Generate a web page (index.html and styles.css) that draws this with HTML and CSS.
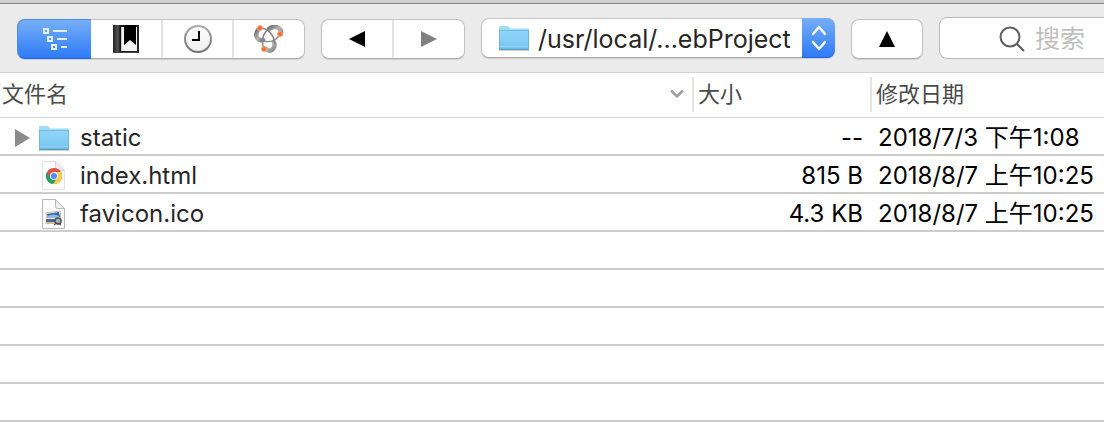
FILE: index.html
```html
<!DOCTYPE html>
<html lang="zh-CN">
<head>
<meta charset="utf-8">
<meta name="viewport" content="width=device-width, initial-scale=1">
<title>文件</title>
<link rel="stylesheet" href="styles.css">
</head>
<body>
<svg class="defs" aria-hidden="true">
  <defs>
    <linearGradient id="folder-fill" x1="0" y1="0" x2="0" y2="1">
      <stop offset="0" stop-color="#90d5f8"/><stop offset="1" stop-color="#78c5f0"/>
    </linearGradient>
    <linearGradient id="metal" x1="0" y1="0" x2="1" y2="1">
      <stop offset="0" stop-color="#777"/><stop offset=".5" stop-color="#b4b4b4"/><stop offset="1" stop-color="#888"/>
    </linearGradient>
    <linearGradient id="spine" x1="0" y1="0" x2="1" y2="0">
      <stop offset="0" stop-color="#222"/><stop offset=".6" stop-color="#555"/><stop offset="1" stop-color="#050505"/>
    </linearGradient>
    <linearGradient id="dial" x1="0" y1="0" x2="0" y2="1">
      <stop offset="0" stop-color="#fff"/><stop offset="1" stop-color="#ededed"/>
    </linearGradient>
    <linearGradient id="rim" x1="0" y1="0" x2="0" y2="1">
      <stop offset="0" stop-color="#aaa"/><stop offset="1" stop-color="#707070"/>
    </linearGradient>
    <symbol id="folder" viewBox="0 0 32 26">
      <path d="M1 25.500h30" stroke="#c9d2d6"/>
      <path d="M1 23V2q0-1 1-1h7q1 0 2 1l1 1.500h18q1 0 1 1V23q0 1-1 1H2q-1 0-1-1z" fill="#a2dcf9"/>
      <path d="M1 6h30v17q0 1-1 1H2q-1 0-1-1z" fill="url(#folder-fill)"/>
      <path d="M1 5.500h30" stroke="#70b9df"/>
      <path d="M1.500 6v17.500h29V6" fill="none" stroke="#6fb9df"/>
      <path d="M2 21.500h28" stroke="#91d3f5"/>
      <path d="M1 24.500h30" stroke="#599fc5"/>
    </symbol>
  </defs>
</svg>
<header class="toolbar">
  <div class="group views">
    <button class="seg active" type="button" aria-label="列表">
      <svg width="24" height="24" viewBox="0 0 24 24" fill="none" stroke="#e2efff" stroke-width="2">
        <path d="M1 2h4v4H1zM5 10h4v4H5zM9 18h4v4H9zM10 4h14M14 12h10M18 20h6"/>
      </svg>
    </button>
    <button class="seg" type="button" aria-label="书签">
      <svg width="26" height="28" viewBox="0 0 26 28">
        <path fill="#222" d="M0 0h26v28H0z"/><path fill="url(#spine)" d="M0 0h8v28H0z"/>
        <path fill="#f2f2f2" d="M8 2h16v24H8z"/><path fill="#ccc" d="M8 2h1v24H8z"/>
        <path d="M11 0h12v20l-6-5-6 5z"/><path d="M0 27.500h26" stroke="#444"/>
      </svg>
    </button>
    <button class="seg" type="button" aria-label="历史记录">
      <svg width="28" height="28" viewBox="0 0 28 28">
        <circle cx="14" cy="14" r="13" fill="url(#dial)" stroke="url(#rim)" stroke-width="2"/>
        <path d="M15 6v9H8" fill="none" stroke="#000" stroke-width="2"/>
      </svg>
    </button>
    <button class="seg" type="button" aria-label="Bonjour">
      <svg width="30" height="28" viewBox="0 0 30 28">
        <g fill="none" stroke-linecap="round">
          <path d="M4 5C0 11 4 16 9 15" stroke="url(#metal)" stroke-width="4.500"/>
          <path d="M15 4C20 0 28 2 27 9" stroke="url(#metal)" stroke-width="4.500"/>
          <path d="M12 24C17 28 22 23 20 17" stroke="url(#metal)" stroke-width="4.500"/>
          <path d="M6 3C14 3 20 10 21 19M10 24C6 14 10 5 19 2M26 9C22 17 14 18 6 15" stroke="#858585" stroke-width="1.500"/>
        </g>
        <g fill="#f26b2b" stroke="#f8a47c"><circle cx="6" cy="3" r="2.500"/><circle cx="26" cy="9" r="2.500"/><circle cx="10" cy="24" r="2.500"/></g>
      </svg>
    </button>
  </div>
  <div class="group nav">
    <button class="seg" type="button" aria-label="后退"><svg width="16" height="16" viewBox="0 0 16 16"><path d="M16 0v16L0 8z"/></svg></button>
    <button class="seg" type="button" aria-label="前进" disabled><svg width="16" height="16" viewBox="0 0 16 16"><path fill="#808080" d="M0 0v16l16-8z"/></svg></button>
  </div>
  <div class="path">
    <svg class="folder" aria-hidden="true"><use href="#folder"/></svg>
    <select class="path-select" aria-label="路径"><option>/usr/local/...ebProject</option></select>
    <span class="stepper">
      <svg width="16" height="26" viewBox="0 0 16 26" fill="none" stroke="#fff" stroke-width="2.500" stroke-linecap="round" stroke-linejoin="round"><path d="M2 9l6-7 6 7M2 17l6 7 6-7"/></svg>
    </span>
  </div>
  <div class="group up">
    <button class="seg" type="button" aria-label="上级目录"><svg width="16" height="16" viewBox="0 0 16 16"><path d="M8 0l8 16H0z"/></svg></button>
  </div>
  <label class="search">
    <svg width="26" height="26" viewBox="0 0 26 26" fill="none" stroke="#5d5d5d" stroke-width="2"><circle cx="11" cy="11" r="9.500"/><path d="M17.500 17.500L25 25"/></svg>
    <input class="search-input" type="text" placeholder="搜索" aria-label="搜索">
  </label>
</header>
<main>
  <table class="files">
    <colgroup><col class="col-name"><col class="col-size"><col class="col-date"></colgroup>
    <thead>
      <tr>
        <th><div class="head sorted">文件名<svg width="16" height="10" viewBox="0 0 16 10" fill="none" stroke="#a0a0a0" stroke-width="2.500"><path d="M2 1.500l6 6 6-6"/></svg></div></th>
        <th><div class="head divided">大小</div></th>
        <th><div class="head divided">修改日期</div></th>
      </tr>
    </thead>
    <tbody>
      <tr>
        <td><div class="name">
          <button class="expand" type="button" aria-label="展开"><svg width="15" height="18" viewBox="0 0 15 18"><path fill="#8b8b8b" d="M0 0v18l15-9z"/></svg></button>
          <svg class="folder" aria-hidden="true"><use href="#folder"/></svg>static</div></td>
        <td class="size">--</td><td class="date">2018/7/3 下午1:08</td>
      </tr>
      <tr>
        <td><div class="name">
          <span class="expand"></span>
          <svg class="doc" viewBox="0 0 32 32" aria-hidden="true">
            <path d="M4.500 1.500h13l9 9v19h-22z" fill="#fcfcfc" stroke="#e3e3e3"/>
            <path d="M17.500 1.500v7q0 2 2 2h7z" fill="#ededed" stroke="#d8d8d8"/>
            <circle cx="16" cy="16" r="8" fill="#dd5144"/>
            <path d="M9.070 12A8 8 0 0 0 15 23.930L19.500 18 16 16l-3.500 2z" fill="#1da462"/>
            <path d="M22.930 12A8 8 0 0 1 15 23.930L19.500 18 16 12z" fill="#ffcd46"/>
            <circle cx="16" cy="16" r="4" fill="#f4f4f4"/><circle cx="16" cy="16" r="3" fill="#4c8bf5"/>
          </svg>index.html</div></td>
        <td class="size">815 B</td><td class="date">2018/8/7 上午10:25</td>
      </tr>
      <tr>
        <td><div class="name">
          <span class="expand"></span>
          <svg class="doc" viewBox="0 0 32 32" aria-hidden="true">
            <path d="M4.500 1.500h13l9 9v20h-22z" fill="#fdfdfd" stroke="#b8b8b8"/>
            <path d="M17.500 1.500v7q0 2 2 2h7z" fill="#eee" stroke="#b8b8b8"/>
            <path d="M8 15l14-2 1 10-14 3z" fill="#fff" stroke="#c4b798"/>
            <path d="M9 16l12-2 1 5-12 1z" fill="#3765ae"/><path d="M9 18q7-3 12 0v2H9z" fill="#92b9e1"/>
            <path d="M7 20h14v6H7z" fill="#eee8dc"/><path d="M8 21h9v3H8z" fill="#46698b"/>
            <path d="M8 25h10" stroke="#b39256"/>
            <circle cx="20" cy="23" r="3" fill="#aab0b2" stroke="#50565a" stroke-width="1.500"/><path d="M16 27l3-2 4 2" fill="none" stroke="#444"/>
          </svg>favicon.ico</div></td>
        <td class="size">4.3 KB</td><td class="date">2018/8/7 上午10:25</td>
      </tr>
      <tr><td></td><td></td><td></td></tr>
      <tr><td></td><td></td><td></td></tr>
      <tr><td></td><td></td><td></td></tr>
      <tr><td></td><td></td><td></td></tr>
      <tr><td></td><td></td><td></td></tr>
    </tbody>
  </table>
</main>
</body>
</html>
```
FILE: styles.css
```css
* { box-sizing: border-box; }
body {
  margin: 0;
  background: #fff;
  color: #262626;
  font-family: Inter, "Noto Sans CJK SC", sans-serif;
  font-size: 24px;
  line-height: 32px;
  overflow-x: hidden;
}
.defs { position: absolute; width: 0; height: 0; }
button, input, select { font: inherit; color: inherit; margin: 0; padding: 0; border: 0; background: none; }
svg { display: block; flex: none; }

.toolbar {
  display: flex;
  align-items: center;
  gap: 16px;
  padding: 17px 0 12px 17px;
  background: linear-gradient(#cfcfcf 3px, #858585 3px, #858585 4px, #ebebeb 4px);
  box-shadow: inset 0 -1px #d3d3d3;
  overflow: hidden;
}
.group {
  display: flex;
  flex: none;
  height: 40px;
  border: 1px solid #c4c4c4;
  border-bottom-color: #adadad;
  border-radius: 8px;
  background: #fff;
  box-shadow: 0 1px 1px #d0d0d0;
}
.views { width: 288px; }
.nav { width: 144px; }
.up { width: 72px; }
.seg {
  display: flex;
  flex: 1;
  align-items: center;
  justify-content: center;
}
.seg + .seg { border-left: 2px solid #e3e3e3; }
.seg.active {
  flex: 0 0 74px;
  margin: -1px 0 -1px -1px;
  border: 1px solid #4d8de8;
  border-width: 1px 0 1px 1px;
  border-radius: 8px 0 0 8px;
  border-bottom-color: #2164dc;
  background: linear-gradient(#76aff5, #2f7bf8);
}
.seg.active + .seg { flex-basis: -2px; border-left: 0; }

.path {
  display: flex;
  flex: none;
  align-items: center;
  width: 354px;
  height: 40px;
  margin-bottom: 2px;
  padding-left: 16px;
  border: 1px solid #c4c4c4;
  border-bottom-color: #adadad;
  border-radius: 8px;
  background: #fff;
  box-shadow: 0 1px 1px #d0d0d0;
}
.folder { width: 32px; height: 26px; }
.path-select {
  flex: 1;
  min-width: 0;
  height: 38px;
  margin-left: 8px;
  padding-top: 2px;
  appearance: none;
  font-size: 25px;
  line-height: 36px;
}
.stepper {
  display: flex;
  flex: none;
  align-items: center;
  justify-content: center;
  align-self: stretch;
  width: 33px;
  margin: -1px -1px -1px 0;
  border-bottom: 1px solid #2164dc;
  border-radius: 0 8px 8px 0;
  background: linear-gradient(#76aff5, #2f7bf8);
}
.search {
  display: flex;
  flex: none;
  align-items: center;
  gap: 10px;
  width: 208px;
  height: 42px;
  margin-bottom: 2px;
  padding: 2px 0 0 59px;
  border: 1px solid #b9b9b9;
  border-radius: 8px;
  background: #fff;
}
.search-input { width: 100px; height: 38px; outline: 0; font-size: 25px; }
.search-input::placeholder { color: #bfbfbf; opacity: 1; }

.files { width: 100%; border-collapse: separate; border-spacing: 0; table-layout: fixed; }
.col-name { width: 692px; }
.col-size { width: 178px; }
th {
  height: 45px;
  padding: 4px 0 5px;
  border-bottom: 1px solid #d3d3d3;
  text-align: left;
  font-weight: 400;
}
.head {
  display: flex;
  align-items: center;
  height: 35px;
  padding: 0 7px 2px 2px;
  color: #4a4a4a;
  font-size: 22px;
}
.sorted { justify-content: space-between; }
.divided { padding-left: 4px; border-left: 2px solid #e3e3e3; }
td { height: 38px; padding: 4px 0 0; border-bottom: 2px solid #ccc; white-space: nowrap; }
.name { display: flex; align-items: center; padding-left: 15px; }
.name .folder, .doc { margin-right: 10px; }
.doc { width: 32px; height: 32px; }
.expand { display: flex; flex: none; width: 23px; }
.size { padding-right: 7px; color: #000; text-align: right; }
.date { padding-left: 8px; color: #000; }
```
